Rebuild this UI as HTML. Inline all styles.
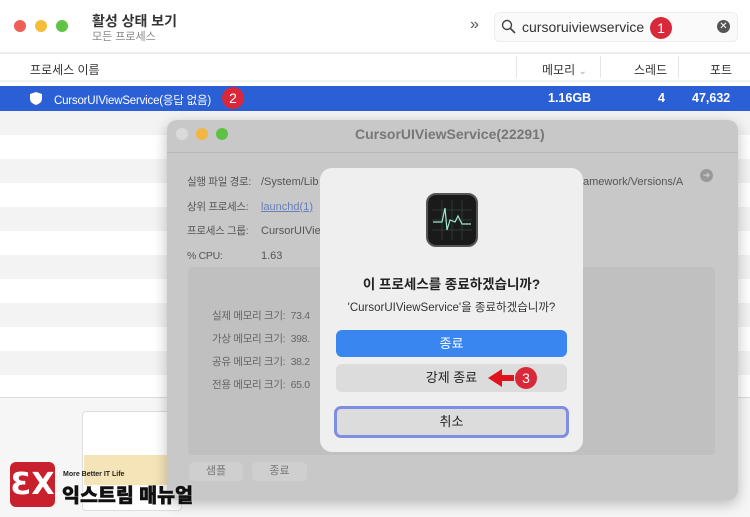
<!DOCTYPE html><html><head><meta charset="utf-8"><style>
*{margin:0;padding:0;box-sizing:border-box}
body{width:750px;height:517px;overflow:hidden;background:#fff;font-family:"Liberation Sans","Noto Sans CJK KR",sans-serif;position:relative;color:#222}
.a{position:absolute}
.dot{position:absolute;width:12px;height:12px;border-radius:50%}
.badge{position:absolute;width:22px;height:22px;border-radius:50%;background:#d8283a;color:#fff;font-size:14px;text-align:center;line-height:22px}
.stripe{position:absolute;left:0;width:750px;height:24px;background:#f3f3f3}
</style></head><body>
<div class="dot" style="left:14px;top:20px;background:#ed5f57"></div>
<div class="dot" style="left:35px;top:20px;background:#f5bd38"></div>
<div class="dot" style="left:56px;top:20px;background:#5fc444"></div>
<div class="a" style="left:92px;top:11px;font-size:14px;font-weight:bold;color:#333">활성 상태 보기</div>
<div class="a" style="left:92px;top:28px;font-size:11px;color:#888">모든 프로세스</div>
<div class="a" style="left:470px;top:16px;font-size:16px;color:#555">»</div>
<div class="a" style="left:494px;top:12px;width:244px;height:30px;border-radius:6px;background:#fafafa;border:1px solid #eee"></div>
<svg class="a" style="left:501px;top:19px" width="15" height="15"><circle cx="6" cy="6" r="4.5" fill="none" stroke="#444" stroke-width="1.4"/><line x1="9.5" y1="9.5" x2="14" y2="14" stroke="#444" stroke-width="1.6"/></svg>
<div class="a" style="left:522px;top:19px;font-size:14px;color:#333">cursoruiviewservice</div>
<div class="badge" style="left:650px;top:17px">1</div>
<div class="a" style="left:717px;top:20px;width:13px;height:13px;border-radius:50%;background:#555;color:#fff;font-size:10px;line-height:13px;text-align:center">✕</div>
<div class="a" style="left:0;top:52px;width:750px;height:2px;background:#ececec"></div>
<div class="a" style="left:30px;top:61px;font-size:12px;color:#333">프로세스 이름</div>
<div class="a" style="left:516px;top:56px;width:1px;height:22px;background:#e6e6e6"></div>
<div class="a" style="left:542px;top:61px;font-size:12px;color:#333">메모리 <span style="color:#aaa;font-size:10px">⌄</span></div>
<div class="a" style="left:600px;top:56px;width:1px;height:22px;background:#e6e6e6"></div>
<div class="a" style="left:634px;top:61px;font-size:12px;color:#333">스레드</div>
<div class="a" style="left:678px;top:56px;width:1px;height:22px;background:#e6e6e6"></div>
<div class="a" style="left:710px;top:61px;font-size:12px;color:#333">포트</div>
<div class="a" style="left:0;top:80px;width:750px;height:2px;background:#f2f2f2"></div>
<div class="a" style="left:0;top:86px;width:750px;height:25px;background:#2a5fd6"></div>
<svg class="a" style="left:29px;top:91px" width="14" height="15"><path d="M7 1 L13 3 V8 Q13 12 7 14 Q1 12 1 8 V3 Z" fill="#fff"/></svg>
<div class="a" style="left:54px;top:92px;font-size:11.5px;color:#fff;letter-spacing:-0.2px">CursorUIViewService(응답 없음)</div>
<div class="badge" style="left:222px;top:87px">2</div>
<div class="a" style="left:548px;top:91px;font-size:12.5px;color:#fff;font-weight:bold">1.16GB</div>
<div class="a" style="left:658px;top:91px;font-size:12.5px;color:#fff;font-weight:bold">4</div>
<div class="a" style="left:692px;top:91px;font-size:12.5px;color:#fff;font-weight:bold">47,632</div>
<div class="stripe" style="top:111px"></div><div class="stripe" style="top:159px"></div><div class="stripe" style="top:207px"></div><div class="stripe" style="top:255px"></div><div class="stripe" style="top:303px"></div><div class="stripe" style="top:351px"></div>
<div class="a" style="left:0;top:397px;width:750px;height:120px;background:#f6f6f6;border-top:1px solid #ddd"></div>
<div class="a" style="left:82px;top:411px;width:100px;height:100px;background:#fff;border:1px solid #ddd;border-radius:4px"></div>
<div class="a" style="left:84px;top:455px;width:96px;height:30px;background:#f4e4b8"></div>
<!-- subwindow -->
<div class="a" style="left:167px;top:120px;width:571px;height:380px;background:#c8c8c8;border-radius:10px;box-shadow:0 4px 14px rgba(0,0,0,.25)"></div>
<div class="a" style="left:167px;top:152px;width:571px;height:1px;background:#b8b8b8"></div>
<div class="dot" style="left:176px;top:128px;background:#dadada"></div>
<div class="dot" style="left:196px;top:128px;background:#f2b740"></div>
<div class="dot" style="left:216px;top:128px;background:#5cc145"></div>
<div class="a" style="left:355px;top:126px;font-size:14px;font-weight:bold;color:#777">CursorUIViewService(22291)</div>
<div class="a" style="left:187px;top:170px;font-size:10.5px;color:#555;line-height:24.5px;letter-spacing:-0.3px">실행 파일 경로:<br>상위 프로세스:<br>프로세스 그룹:<br>% CPU:</div>
<div class="a" style="left:261px;top:170px;font-size:11px;color:#555;line-height:24.5px">/System/Lib<br><span style="color:#6a7fb8;text-decoration:underline">launchd(1)</span><br>CursorUIVie<br>1.63</div>
<div class="a" style="left:583px;top:170px;font-size:11px;color:#555;line-height:24.5px">amework/Versions/A</div>
<div class="a" style="left:700px;top:169px;width:13px;height:13px;border-radius:50%;background:#999;color:#ccc;font-size:9px;text-align:center;line-height:13px">➜</div>
<div class="a" style="left:188px;top:267px;width:527px;height:188px;background:#c0c0c0;border-radius:4px"></div>
<div class="a" style="left:212px;top:305px;font-size:10.5px;color:#666;line-height:23px;letter-spacing:-0.3px">실제 메모리 크기:&nbsp; 73.4<br>가상 메모리 크기:&nbsp; 398.<br>공유 메모리 크기:&nbsp; 38.2<br>전용 메모리 크기:&nbsp; 65.0</div>
<div class="a" style="left:189px;top:462px;width:54px;height:19px;border-radius:5px;background:#cfcfcf;font-size:11px;color:#777;text-align:center;line-height:19px">샘플</div>
<div class="a" style="left:252px;top:462px;width:55px;height:19px;border-radius:5px;background:#cfcfcf;font-size:11px;color:#777;text-align:center;line-height:19px">종료</div>
<!-- dialog -->
<div class="a" style="left:320px;top:168px;width:263px;height:284px;background:#efefef;border-radius:12px"></div>
<div class="a" style="left:426px;top:193px;width:52px;height:54px;border-radius:10px;background:#1a1a1a;border:2px solid #555"></div>
<svg class="a" style="left:432px;top:200px" width="40" height="40"><g stroke="#3a5a50" stroke-width=".5"><line x1="0" y1="10" x2="40" y2="10"/><line x1="0" y1="20" x2="40" y2="20"/><line x1="0" y1="30" x2="40" y2="30"/><line x1="10" y1="0" x2="10" y2="40"/><line x1="20" y1="0" x2="20" y2="40"/><line x1="30" y1="0" x2="30" y2="40"/></g><path d="M1 22 H10 L13 8 L15 30 L18 20 L23 22 L26 16 L30 24 H39" fill="none" stroke="#9fe8d0" stroke-width="1.2"/></svg>
<div class="a" style="left:320px;top:273px;width:263px;text-align:center;font-size:13.5px;font-weight:bold;color:#222">이 프로세스를 종료하겠습니까?</div>
<div class="a" style="left:320px;top:299px;width:263px;text-align:center;font-size:11.5px;color:#333">'CursorUIViewService'을 종료하겠습니까?</div>
<div class="a" style="left:336px;top:330px;width:231px;height:27px;border-radius:6px;background:#3a86f0;color:#fff;font-size:13px;text-align:center;line-height:27px">종료</div>
<div class="a" style="left:336px;top:364px;width:231px;height:28px;border-radius:6px;background:#dcdcdc;color:#222;font-size:13px;text-align:center;line-height:28px">강제 종료</div>
<svg class="a" style="left:486px;top:367px" width="30" height="22"><path d="M2 11 L16 2 V8 H28 V14 H16 V20 Z" fill="#e0121e"/></svg>
<div class="badge" style="left:515px;top:367px">3</div>
<div class="a" style="left:334px;top:406px;width:235px;height:32px;border-radius:7px;background:#dcdcdc;border:3px solid #7f8ee0;color:#222;font-size:13px;text-align:center;line-height:26px">취소</div>
<!-- logo -->
<div class="a" style="left:10px;top:462px;width:45px;height:45px;border-radius:6px;background:#c8202c;color:#fff;font-size:30px;font-weight:bold;text-align:center;line-height:45px;font-family:'DejaVu Sans',sans-serif">ƐX</div>
<div class="a" style="left:63px;top:471px;font-size:7px;font-weight:bold;color:#222">More Better IT Life</div>
<div class="a" style="left:62px;top:479px;font-size:19.5px;font-weight:900;color:#111;-webkit-text-stroke:.5px #111;text-shadow:0 0 2px #fff">익스트림 매뉴얼</div>
</body></html>
